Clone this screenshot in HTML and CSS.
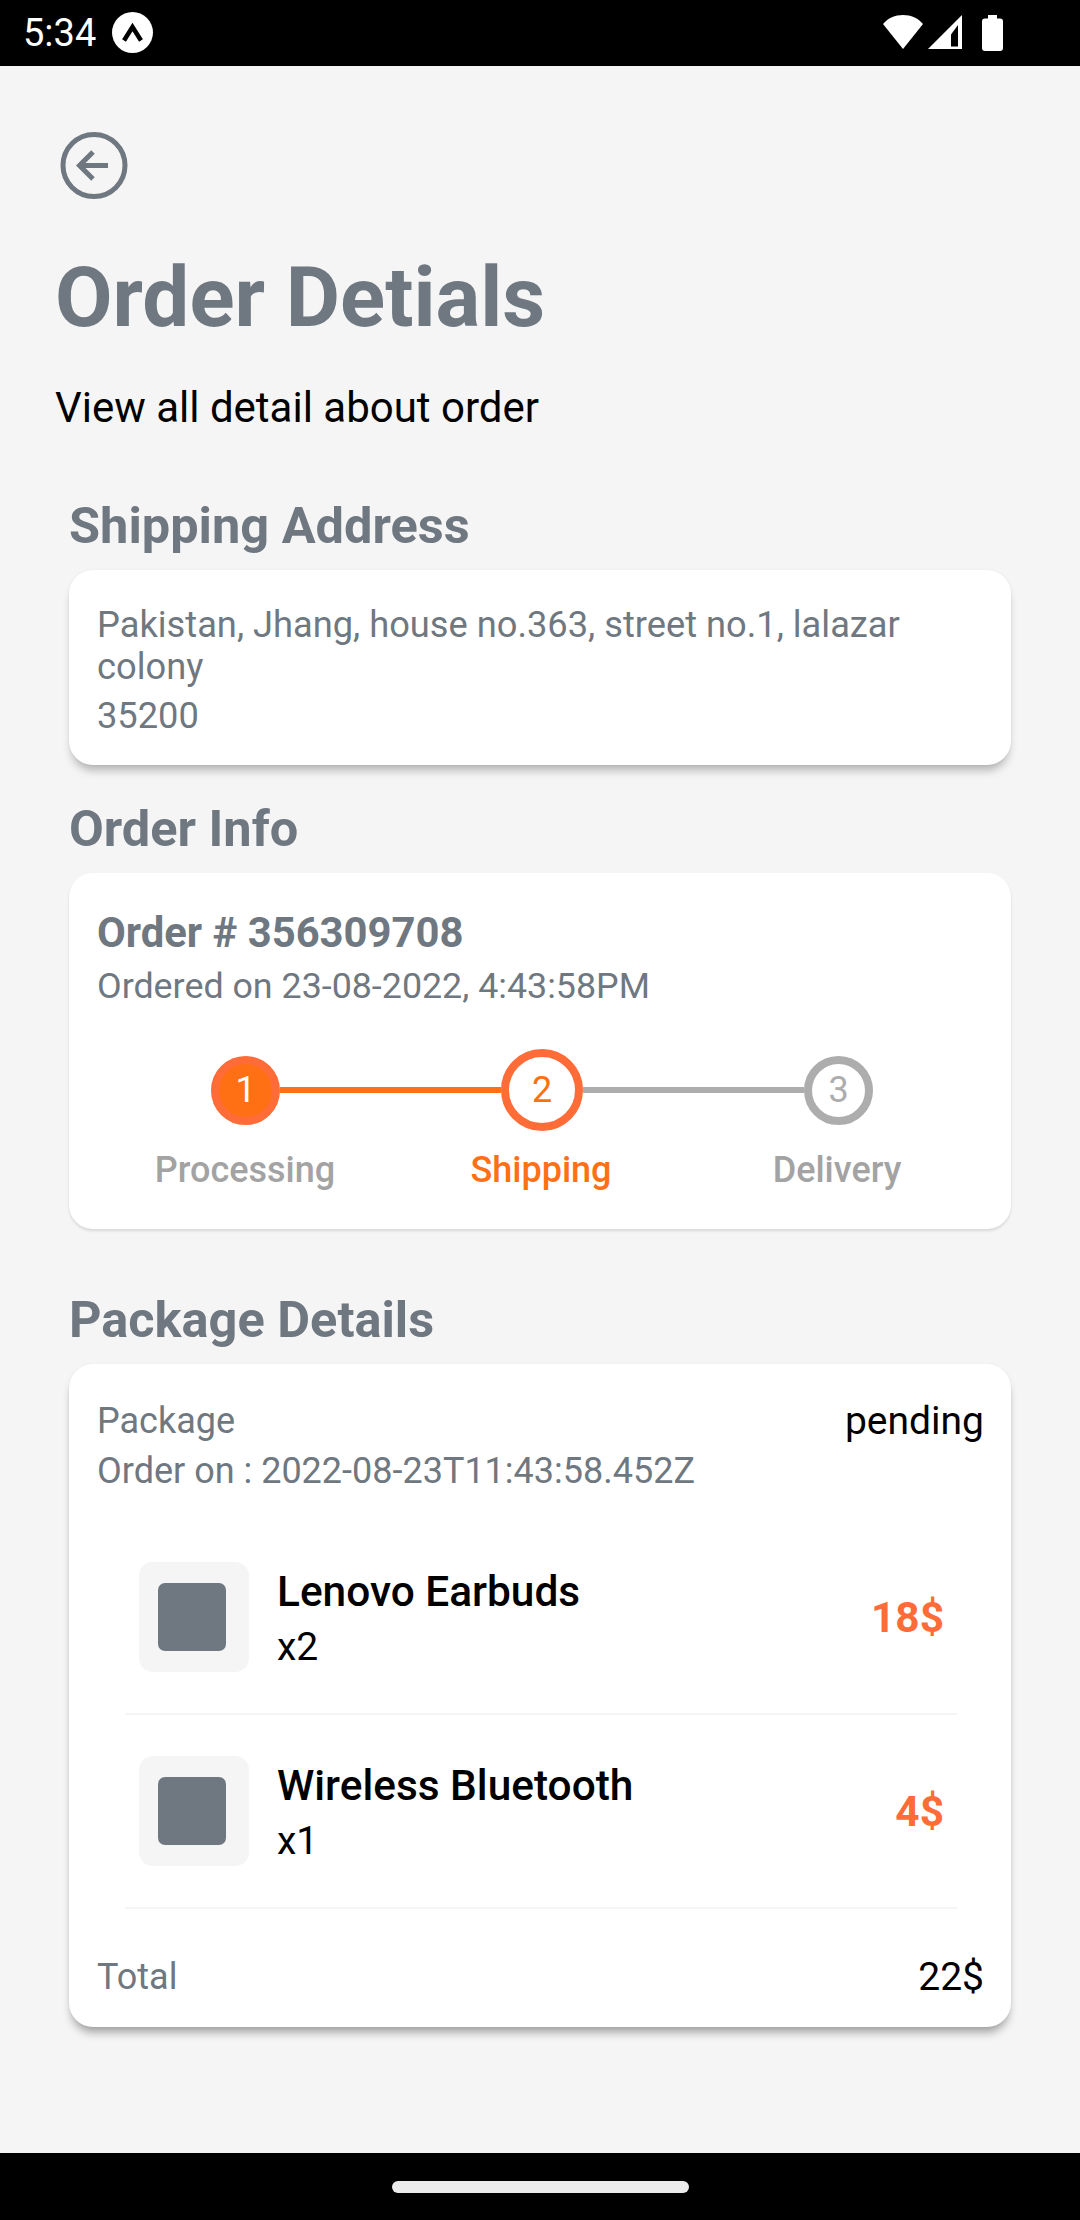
FILE: index.html
```html
<!DOCTYPE html>
<html lang="en">
<head>
    <meta charset="UTF-8">
    <meta name="viewport" content="width=device-width, initial-scale=1.0">
    <title>Order Details</title>
    <link rel="stylesheet" href="styles.css">
</head>
<body>
    <!-- Status bar -->
    <div class="status-bar">
        <div class="status-left">
            <span class="time">5:34</span>
            <svg width="42" height="42" viewBox="0 0 42 42">
                <circle cx="20.500" cy="20.500" r="20.500" fill="#fff"/>
                <path d="M12 28.500 L20.500 15 L29 28.500" fill="none" stroke="#000" stroke-width="4.500"/>
            </svg>
        </div>
        <div class="status-right">
            <svg class="wifi" width="40" height="34" viewBox="0 0 40 34"><path d="M0 9 C5 3 12 0 20 0 C28 0 35 3 40 9 L20 34 Z" fill="#fff"/></svg>
            <svg width="34" height="34" viewBox="0 0 34 34"><path d="M34 0 V34 H0 Z" fill="#fff"/><path d="M23 19.500 L30 10 V31.500 H23 Z" fill="#000"/></svg>
            <svg class="battery" width="21" height="36" viewBox="0 0 21 36"><path d="M6 0 H15 V3.500 H18 Q21 3.500 21 6.500 V33 Q21 36 18 36 H3 Q0 36 0 33 V6.500 Q0 3.500 3 3.500 H6 Z" fill="#fff"/></svg>
        </div>
    </div>

    <main class="screen">
        <svg class="back-icon" width="68" height="68" viewBox="0 0 68 68" fill="none" stroke="#6f7880" stroke-width="5">
            <circle cx="34" cy="33.500" r="31"/>
            <path d="M33 20 L19.500 33.500 L33 47 M20 33.500 H48"/>
        </svg>
        <h1 class="page-title">Order Detials</h1>
        <p class="page-sub">View all detail about order</p>

        <section class="block block-address">
            <h2 class="block-title">Shipping Address</h2>
            <div class="card card-address">
                <p class="address">Pakistan, Jhang, house no.363, street no.1, lalazar colony</p>
                <p class="zip">35200</p>
            </div>
        </section>

        <section class="block block-info">
            <h2 class="block-title">Order Info</h2>
            <div class="card card-info">
                <div class="order-no">Order # 356309708</div>
                <div class="order-date">Ordered on 23-08-2022, 4:43:58PM</div>
                <div class="track">
                    <div class="step step-done">1</div>
                    <div class="line line-on"></div>
                    <div class="step step-current">2</div>
                    <div class="line"></div>
                    <div class="step">3</div>
                </div>
                <div class="step-labels">
                    <span>Processing</span>
                    <span class="label-on">Shipping</span>
                    <span>Delivery</span>
                </div>
            </div>
        </section>

        <section class="block block-package">
            <h2 class="block-title">Package Details</h2>
            <div class="card card-package">
                <div class="package-head">
                    <div>
                        <div class="muted">Package</div>
                        <div class="muted order-on">Order on : 2022-08-23T11:43:58.452Z</div>
                    </div>
                    <div class="status">pending</div>
                </div>
                <div class="item">
                    <div class="thumb"><div class="thumb-box"></div></div>
                    <div class="item-text">
                        <div class="item-name">Lenovo Earbuds</div>
                        <div class="item-qty">x2</div>
                    </div>
                    <div class="item-price">18$</div>
                </div>
                <div class="item">
                    <div class="thumb"><div class="thumb-box"></div></div>
                    <div class="item-text">
                        <div class="item-name">Wireless Bluetooth</div>
                        <div class="item-qty">x1</div>
                    </div>
                    <div class="item-price">4$</div>
                </div>
                <div class="total">
                    <span class="muted">Total</span>
                    <span class="total-value">22$</span>
                </div>
            </div>
        </section>
    </main>

    <!-- Navigation bar -->
    <div class="nav-bar"><div class="home-pill"></div></div>
</body>
</html>
```
FILE: styles.css
```css
* {
    box-sizing: border-box;
}

html, body {
    margin: 0;
    padding: 0;
}

body {
    width: 1080px;
    height: 2220px;
    display: flex;
    flex-direction: column;
    font-family: 'Roboto', sans-serif;
    background-color: #f5f5f5;
    overflow: hidden;
}

p, h1, h2 {
    margin: 0;
}

.status-bar {
    height: 66px;
    flex: none;
    background-color: #000;
    color: #fff;
    display: flex;
    justify-content: space-between;
    align-items: center;
    padding: 0 77px 0 23px;
}

.status-left {
    display: flex;
    align-items: center;
    gap: 16px;
}

.time {
    font-size: 38px;
}

.status-right {
    display: flex;
    align-self: flex-start;
    margin-top: 15px;
    gap: 5px;
}

.battery {
    margin-left: 15px;
}

.screen {
    flex: 1;
    padding-top: 66px;
}

.back-icon {
    display: block;
    margin-left: 60px;
}

.page-title {
    margin: 49px 0 0 55px;
    font-size: 83.5px;
    line-height: 98px;
    font-weight: 700;
    color: #6f7880;
}

.page-sub {
    margin: 36px 0 0 55px;
    font-size: 42px;
    line-height: 50px;
    color: #000;
}

.block {
    margin: 0 69px;
}

.block-title {
    font-size: 50.5px;
    line-height: 60px;
    font-weight: 700;
    color: #6f7880;
}

.block-address {
    margin-top: 63px;
}

.block-info {
    margin-top: 34px;
}

.block-package {
    margin-top: 61px;
}

.card {
    margin-top: 14px;
    background-color: #fff;
    border-radius: 24px;
    padding: 0 27px 0 28px;
    box-shadow: 0 2px 3px rgba(0, 0, 0, 0.12);
}

.card-address {
    height: 195px;
    padding-top: 34px;
    box-shadow: 0 0 3px rgba(0, 0, 0, 0.05), 0 8px 10px -3px rgba(0, 0, 0, 0.28);
}

.address, .zip {
    font-size: 36.25px;
    line-height: 42px;
    color: #6f7880;
}

.zip {
    margin-top: 7px;
}

.card-info {
    height: 356px;
    padding-top: 35px;
}

.order-no {
    font-size: 41.8px;
    line-height: 50px;
    font-weight: 700;
    color: #6f7880;
}

.order-date {
    margin-top: 7px;
    font-size: 35.8px;
    line-height: 42px;
    color: #6f7880;
}

.track {
    margin-top: 42px;
    height: 82px;
    padding: 0 111px 0 114px;
    display: flex;
    align-items: center;
}

.step {
    width: 69px;
    height: 69px;
    flex: none;
    border-radius: 50%;
    border: 8px solid #adadad;
    background-color: #fff;
    color: #adadad;
    font-size: 36px;
    display: flex;
    align-items: center;
    justify-content: center;
}

.step-done {
    border-color: #ff6c37;
    background-color: #ff7015;
    color: #fff;
}

.step-current {
    width: 82px;
    height: 82px;
    border-color: #ff6c37;
    color: #ff7015;
}

.line {
    flex: 1;
    height: 6px;
    background-color: #adadad;
}

.line-on {
    background-color: #ff7015;
}

.step-labels {
    margin: 18px -1px 0 0;
    display: grid;
    grid-template-columns: repeat(3, 1fr);
    text-align: center;
    font-size: 36px;
    line-height: 42px;
    font-weight: 500;
    color: #a3a3a3;
}

.label-on {
    color: #ff7015;
}

.card-package {
    height: 663px;
    padding-top: 36px;
    box-shadow: 0 0 3px rgba(0, 0, 0, 0.05), 0 8px 10px -3px rgba(0, 0, 0, 0.36);
}

.package-head {
    display: flex;
    justify-content: space-between;
}

.muted {
    font-size: 36px;
    line-height: 42px;
    color: #6f7880;
}

.order-on {
    margin-top: 8px;
}

.status, .total-value {
    font-size: 39px;
    line-height: 42px;
    color: #000;
}

.item {
    width: 832px;
    height: 194px;
    margin-left: 28px;
    padding: 0 13px 0 14px;
    display: flex;
    align-items: center;
    border-bottom: 2px solid #f5f5f5;
}

.package-head + .item {
    margin-top: 29px;
}

.thumb {
    width: 110px;
    height: 110px;
    flex: none;
    padding-left: 19px;
    border-radius: 14px;
    background-color: #f5f5f5;
    display: flex;
    align-items: center;
}

.thumb-box {
    width: 68px;
    height: 68px;
    border-radius: 7px;
    background-color: #6f7880;
}

.item-text {
    flex: 1;
    margin-left: 28px;
}

.item-name {
    font-size: 42.4px;
    line-height: 50px;
    font-weight: 500;
    color: #000;
}

.item-qty {
    margin-top: 9px;
    font-size: 39px;
    line-height: 42px;
    color: #000;
}

.item-price {
    font-size: 42.4px;
    font-weight: 700;
    color: #ff6c37;
}

.total {
    margin-top: 47px;
    display: flex;
    justify-content: space-between;
    align-items: center;
}

.nav-bar {
    height: 67px;
    flex: none;
    background-color: #000;
    display: flex;
    align-items: center;
    justify-content: center;
}

.home-pill {
    width: 297px;
    height: 12px;
    border-radius: 6px;
    background-color: #ececec;
}
```
